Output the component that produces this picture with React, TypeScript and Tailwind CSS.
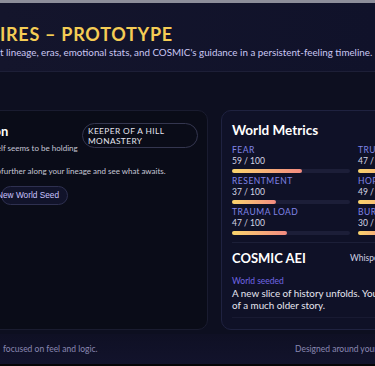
import React from "react";

const Clip = ({ hidden, children, className = "" }: { hidden: string; children: React.ReactNode; className?: string }) => (
  <div className={"flex whitespace-nowrap " + className}>
    <span className="flex w-0 justify-end whitespace-nowrap">{hidden}</span>
    <span>{children}</span>
  </div>
);

const metrics = [
  { label: "FEAR", value: 59, label2: "TRUST", value2: 47 },
  { label: "RESENTMENT", value: 37, label2: "HOPE", value2: 49 },
  { label: "TRAUMA LOAD", value: 47, label2: "BURDEN", value2: 30 },
];

const Metric = ({ label, value }: { label: string; value: number }) => (
  <div className="flex flex-col">
    <div className="text-[8.5px] leading-[11px] tracking-[0.06em] text-[#8084e6]">{label}</div>
    <div className="text-[8.5px] leading-[11px] text-[#d6d6e6]">{value} / 100</div>
    <div className="mt-[2px] h-[4px] w-full rounded-full bg-[#1c1e38]">
      <div
        className="h-full rounded-full bg-gradient-to-r from-[#f9d46b] to-[#f28a80]"
        style={{ width: `${value}%` }}
      />
    </div>
  </div>
);

export default function App() {
  return (
    <div
      className="relative h-[366px] w-[375px] overflow-hidden bg-[#0d0f20] text-white"
      style={{ fontFamily: "Lato, 'Noto Sans', sans-serif" }}
    >
      <div className="h-[3px] bg-[#8d8e9a]" />
      {/* header */}
      <div className="h-[69px] border-b border-[#1d1f37] bg-gradient-to-r from-[#14152c] to-[#10122a] pt-[20px]">
        <Clip hidden="LINEAGE EMP" className="text-[18px] font-bold leading-[22px] tracking-[0.04em] text-[#f5cd55]">
          IRES – PROTOTYPE
        </Clip>
        <Clip hidden="Explore a distinc" className="mt-[1px] text-[9.8px] leading-[13px] text-[#cac7f3]">
          t lineage, eras, emotional stats, and COSMIC's guidance in a persistent-feeling timeline.
        </Clip>
      </div>

      {/* main */}
      <div className="flex h-[262px] gap-[13px] pt-[38px]">
        <div className="ml-[-20px] h-[220px] w-[228px] shrink-0 rounded-[10px] border border-[#1a1c30] bg-[#0a0c18] pl-[20px] pr-[9px] pt-[12px]">
          <div className="flex items-start justify-between">
            <div>
              <Clip hidden="Current Incarnatio" className="text-[13px] font-bold leading-[16px] text-white">
                n
              </Clip>
              <Clip hidden="Your se" className="mt-[3px] text-[8px] leading-[12px] text-[#c6c6d6]">
                lf seems to be holding
              </Clip>
            </div>
            <div className="flex h-[25px] w-[116px] flex-col justify-center rounded-full border border-[#34364f] pl-[5px] text-[8.3px] leading-[10px] tracking-[0.05em] text-[#e4e4ee]">
              <div>KEEPER OF A HILL</div>
              <div>MONASTERY</div>
            </div>
          </div>
          <Clip hidden="Step" className="mt-[11px] text-[8px] leading-[12px] text-[#c6c6d6]">
            further along your lineage and see what awaits.
          </Clip>
          <div className="mt-[9px] flex">
            <div className="flex h-[19px] items-center rounded-full border border-[#2e3050] bg-[#11132a] pr-[8px]">
              <span
                className="ml-[-5px] whitespace-nowrap text-[8.3px] text-[#c9c3ff]"
                style={{ fontFamily: "'Liberation Sans', Arial, sans-serif" }}
              >
                New World Seed
              </span>
            </div>
          </div>
        </div>

        <div className="h-[220px] w-[300px] shrink-0 rounded-[10px] border border-[#1f2240] bg-[#0f1127] px-[10px] pt-[9px]">
          <div className="text-[13.5px] font-bold leading-[20px] text-white">World Metrics</div>
          <div className="mt-[5px] grid grid-cols-[118px_118px] gap-x-[8px] gap-y-[3px]">
            {metrics.map((m) => (
              <React.Fragment key={m.label}>
                <Metric label={m.label} value={m.value} />
                <Metric label={m.label2} value={m.value2} />
              </React.Fragment>
            ))}
          </div>
          <div className="mt-[7px] border-t border-[#1c1f38] pt-[6px]">
            <div className="flex items-center">
              <div className="w-[118px] text-[13px] font-bold leading-[18px] text-white">COSMIC AEI</div>
              <div className="text-[8.5px] text-[#d2d2e2]">Whispers from beyond</div>
            </div>
            <div className="mt-[8px] text-[8.5px] leading-[12px] text-[#6f66e4]">World seeded</div>
            <div className="text-[9.8px] leading-[12px] text-[#e6e6f0]">
              <div className="whitespace-nowrap">A new slice of history unfolds. You are one thread</div>
              <div>of a much older story.</div>
            </div>
            <div className="mt-[6px] border-t border-[#181a32]" />
          </div>
        </div>
      </div>

      {/* footer */}
      <div className="flex h-[30px] items-center bg-gradient-to-b from-[#0f1024] to-[#12132c] text-[8.5px] text-[#8a88b2]">
        <div className="w-[295px] shrink-0 pl-[3px]">focused on feel and logic.</div>
        <div className="whitespace-nowrap">Designed around your story</div>
      </div>
      <div className="h-[4px] bg-[#050507]" />
    </div>
  );
}
